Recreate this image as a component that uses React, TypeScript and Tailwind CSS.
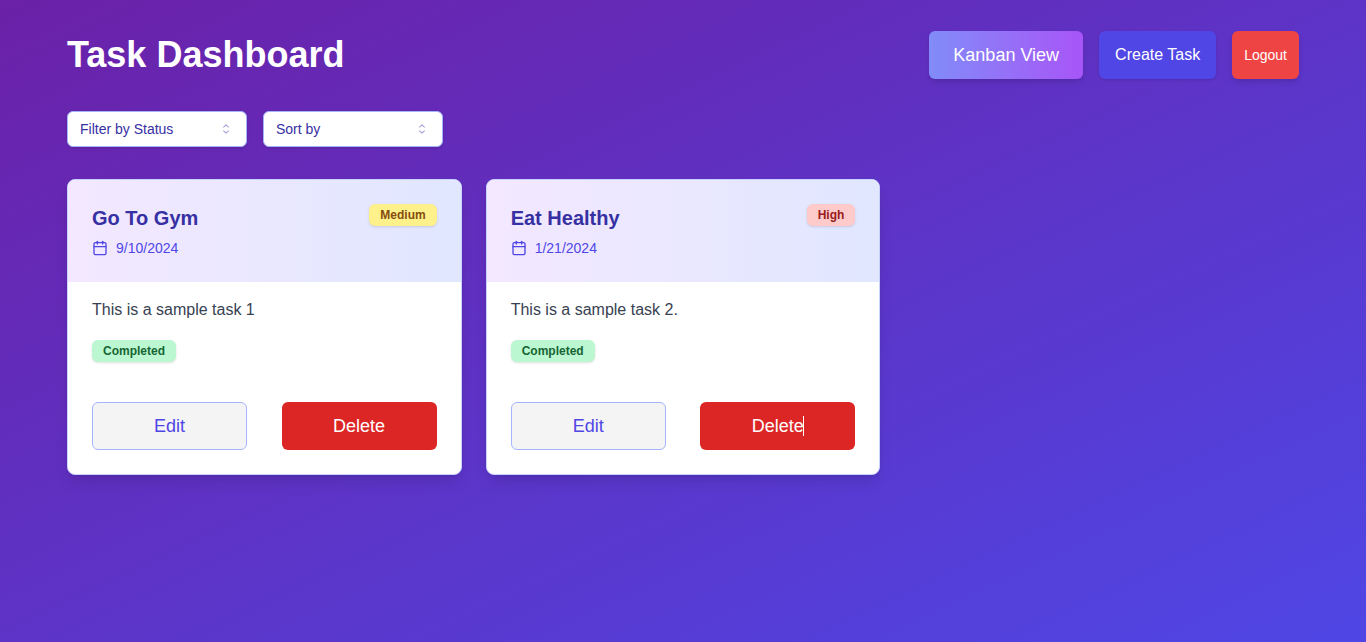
import { Calendar } from "lucide-react";
import { RxCaretSort } from "react-icons/rx";

type Task = {
  title: string;
  date: string;
  description: string;
  status: string;
  priority: "Medium" | "High";
  caret?: boolean;
};

const tasks: Task[] = [
  {
    title: "Go To Gym",
    date: "9/10/2024",
    description: "This is a sample task 1",
    status: "Completed",
    priority: "Medium",
  },
  {
    title: "Eat Healthy",
    date: "1/21/2024",
    description: "This is a sample task 2.",
    status: "Completed",
    priority: "High",
    caret: true,
  },
];

const priorityStyles = {
  Medium: "bg-[#fef08a] text-[#854d0e]",
  High: "bg-[#fecaca] text-[#991b1b]",
};

function Badge({ label, tone }: { label: string; tone: string }) {
  return (
    <span
      className={`inline-flex items-center rounded-md border border-transparent px-2.5 py-0.5 text-xs font-semibold shadow ${tone}`}
    >
      {label}
    </span>
  );
}

function Filter({ label, options }: { label: string; options: string[] }) {
  return (
    <div className="relative w-[180px]">
      <select
        aria-label={label}
        defaultValue=""
        className="h-9 w-full appearance-none rounded-md border border-[#a5b4fc] bg-white px-3 text-sm text-[#3730a3] shadow-sm"
      >
        <option value="">{label}</option>
        {options.map((option) => (
          <option key={option}>{option}</option>
        ))}
      </select>
      <RxCaretSort className="pointer-events-none absolute inset-y-0 right-[13px] my-auto size-4 text-[#3730a3] opacity-50" />
    </div>
  );
}

function TaskCard({ task }: { task: Task }) {
  return (
    <article className="overflow-hidden rounded-lg border border-[#c7d2fe] bg-white shadow-lg">
      <div className="flex items-start justify-between bg-[linear-gradient(to_right,#f3e8ff,#e0e7ff)] p-6">
        <div>
          <h2 className="text-xl font-bold text-[#3730a3]">{task.title}</h2>
          <p className="mt-1.5 flex items-center gap-2 text-sm text-[#4f46e5]">
            <Calendar className="size-4" />
            {task.date}
          </p>
        </div>
        <Badge label={task.priority} tone={priorityStyles[task.priority]} />
      </div>
      <div className="px-6 pt-4">
        <p className="mb-4 text-base text-[#374151]">{task.description}</p>
        <Badge label={task.status} tone="bg-[#bbf7d0] text-[#166534]" />
      </div>
      <div className="flex justify-between px-6 pt-10 pb-6">
        <button className="h-12 w-[45%] rounded-md border border-[#a5b4fc] bg-[#f4f4f5] text-lg text-[#4f46e5]">
          Edit
        </button>
        <button className="flex h-12 w-[45%] items-center justify-center rounded-md bg-[#dc2626] text-lg text-white">
          <span className="relative">
            Delete
            {task.caret && <span className="absolute inset-y-1 right-0 w-px bg-white" />}
          </span>
        </button>
      </div>
    </article>
  );
}

export default function App() {
  return (
    <div className="min-h-screen bg-[linear-gradient(to_bottom_right,#6b21a8,#4f46e5)] font-['Liberation_Sans',Arial,sans-serif]">
      <main className="mx-auto max-w-7xl px-6 pt-[31px] pb-8">
        <header className="mb-8 flex flex-wrap items-center justify-between gap-4">
          <h1 className="text-4xl font-bold text-white">Task Dashboard</h1>
          <div className="flex items-center gap-4">
            <button className="h-12 rounded-md bg-[linear-gradient(to_right,#818cf8,#a855f7)] px-6 text-lg text-white shadow-md">
              Kanban View
            </button>
            <button className="h-12 rounded-md bg-[#4f46e5] px-4 text-base text-white shadow-sm">
              Create Task
            </button>
            <button className="h-12 rounded-md bg-[#ef4444] px-3 text-sm text-white shadow-md">
              Logout
            </button>
          </div>
        </header>
        <div className="mb-8 flex flex-wrap gap-4">
          <Filter label="Filter by Status" options={["Pending", "In Progress", "Completed"]} />
          <Filter label="Sort by" options={["Due Date", "Priority"]} />
        </div>
        <section className="grid gap-6 md:grid-cols-2 lg:grid-cols-3">
          {tasks.map((task) => (
            <TaskCard key={task.title} task={task} />
          ))}
        </section>
      </main>
    </div>
  );
}
